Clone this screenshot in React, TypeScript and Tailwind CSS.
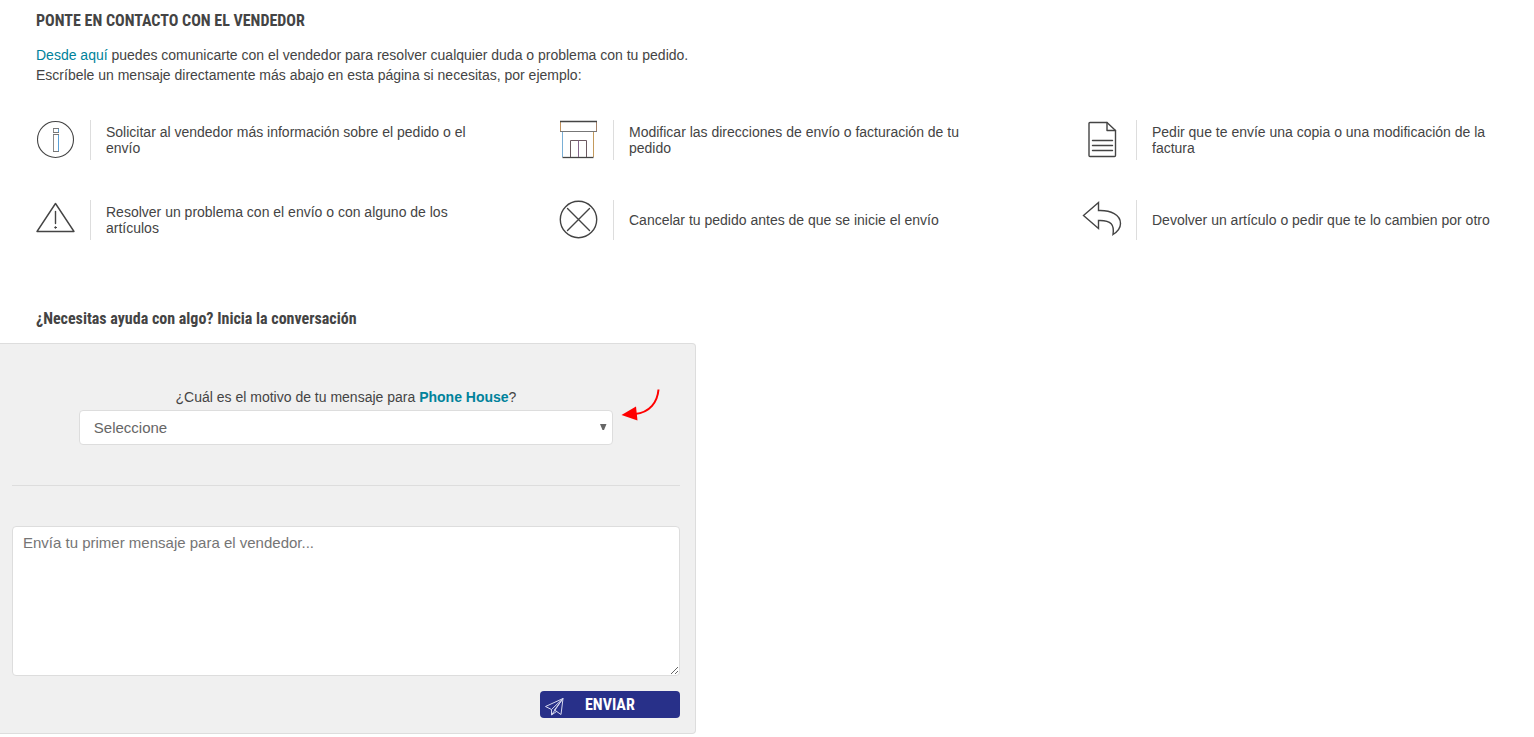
import type { ReactNode } from 'react';

const heading = "font-['Roboto_Condensed','Liberation_Sans',sans-serif] font-bold text-[#444444]";

function Icon({ children }: { children: ReactNode }) {
  return (
    <svg
      width="40"
      height="40"
      viewBox="0 0 40 40"
      fill="none"
      stroke="#444444"
      strokeWidth="1.4"
      strokeLinejoin="round"
      strokeLinecap="round"
      className="shrink-0"
      aria-hidden="true"
    >
      {children}
    </svg>
  );
}

const reasons: { text: string; icon: ReactNode }[] = [
  {
    text: 'Solicitar al vendedor más información sobre el pedido o el envío',
    icon: (
      <>
        <circle cx="19.5" cy="19.5" r="18" strokeWidth="1.1" />
        <g strokeWidth="1" strokeLinejoin="miter" strokeLinecap="butt">
          <path d="M17.5 8v5M17.500 14v18" stroke="#8a8a8a" />
          <path d="M22.5 8v5M22.500 14v18" stroke="#5aa0d6" />
          <path d="M17 8.500h6M17 12.500h6M17 14.500h6M17 31.500h6" stroke="#777777" />
        </g>
      </>
    ),
  },
  {
    text: 'Modificar las direcciones de envío o facturación de tu pedido',
    icon: (
      <g strokeWidth="1" strokeLinecap="butt">
        <path d="M3.500 12v25" stroke="#79afd6" />
        <path d="M34.500 12v25" stroke="#c49a5c" />
        <path d="M3.500 37.500h31" strokeWidth="1.300" />
        <path d="M1.500 1.500v10" stroke="#c0905c" />
        <path d="M37.500 1.500v10" stroke="#a28068" />
        <path d="M1 1.500h37" strokeWidth="1.300" />
        <path d="M1 11.500h37" stroke="#777777" />
        <path d="M11.500 37V20.500h16V37" stroke="#6b5961" />
        <path d="M19.500 20.500V37" stroke="#85658c" />
      </g>
    ),
  },
  {
    text: 'Pedir que te envíe una copia o una modificación de la factura',
    icon: (
      <>
        <path d="M8 2.500h17l8.500 8v25a1 1 0 0 1-1 1H8a1 1 0 0 1-1-1v-32a1 1 0 0 1 1-1z" />
        <path d="M25 2.500v8h8.500M10.500 20.500h20M10.500 25.500h20M10.500 30.500h20" />
      </>
    ),
  },
  {
    text: 'Resolver un problema con el envío o con alguno de los artículos',
    icon: (
      <>
        <path d="M19.500 3.500L38 31.500H1z" />
        <path d="M19.500 11.500v12" />
        <circle cx="19.500" cy="27.500" r="0.800" fill="#444444" strokeWidth="1" />
      </>
    ),
  },
  {
    text: 'Cancelar tu pedido antes de que se inicie el envío',
    icon: (
      <>
        <circle cx="19.500" cy="19.500" r="18.200" />
        <path d="M8.500 8.500l22 22M30.500 8.500l-22 22" />
      </>
    ),
  },
  {
    text: 'Devolver un artículo o pedir que te lo cambien por otro',
    icon: (
      <path
        d="M1.500 15.500L16.500 2.500V10.500C29 10 38.500 15 38.500 23.500C38.500 28.500 35 32 31 34.500C32.500 25 29.500 20 16.500 20.500V28.500Z"
        strokeLinejoin="miter"
      />
    ),
  },
];

export default function App() {
  return (
    <main className="bg-white font-['Liberation_Sans',Arial,sans-serif] text-sm text-[#444444]">
      <section className="pt-[11px] pr-3 pl-9">
        <h1 className={`${heading} text-base leading-5`}>PONTE EN CONTACTO CON EL VENDEDOR</h1>
        <p className="mt-3.5 leading-5">
          <a href="#mensaje" className="text-[#00829b]">Desde aquí</a> puedes comunicarte con el vendedor para
          resolver cualquier duda o problema con tu pedido.
          <br />
          Escríbele un mensaje directamente más abajo en esta página si necesitas, por ejemplo:
        </p>
        <ul className="mt-[35px] grid grid-cols-3 gap-x-[83px] gap-y-10">
          {reasons.map((reason) => (
            <li key={reason.text} className="flex h-10 items-center">
              <Icon>{reason.icon}</Icon>
              <p className="ml-3.5 flex h-10 items-center border-l border-[#dddddd] pl-[15px] leading-4">
                {reason.text}
              </p>
            </li>
          ))}
        </ul>
      </section>

      <section className="mt-[69px]">
        <h2 className={`${heading} pl-9 text-base leading-5`}>¿Necesitas ayuda con algo? Inicia la conversación</h2>
        <form
          id="mensaje"
          onSubmit={(event) => event.preventDefault()}
          className="mt-3.5 w-full max-w-[696px] rounded-r border border-l-0 border-[#dddddd] bg-[#f0f0f0] pt-[43px] pr-[15px] pb-[15px] pl-3"
        >
          <div className="relative mx-auto w-4/5">
            <label htmlFor="motivo" className="block text-center leading-5">
              ¿Cuál es el motivo de tu mensaje para <b className="text-[#00829b]">Phone House</b>?
            </label>
            <div className="relative mt-[3px]">
              <select
                id="motivo"
                className="block h-[35px] w-full appearance-none rounded border border-[#dddddd] bg-white px-3.5 text-[15px] text-[#666666]"
              >
                <option>Seleccione</option>
              </select>
              <svg
                width="8"
                height="7"
                viewBox="0 0 8 7"
                className="pointer-events-none absolute top-3.5 right-1.5"
                aria-hidden="true"
              >
                <path d="M1 0h6.500L5 6H3.500z" fill="#666666" />
              </svg>
            </div>
            <svg
              width="40"
              height="34"
              viewBox="0 0 40 34"
              fill="none"
              className="pointer-events-none absolute top-0 left-full ml-2"
              aria-hidden="true"
            >
              <path d="M37.500 2.500C36.500 15 29 25.500 14 27" stroke="#ff0000" strokeWidth="2" />
              <path d="M0.500 28L15 19.500L16.500 33.500Z" fill="#ff0000" />
            </svg>
          </div>

          <hr className="mt-10 border-[#dddddd]" />

          <textarea
            aria-label="Mensaje para el vendedor"
            placeholder="Envía tu primer mensaje para el vendedor..."
            className="mt-10 block h-[150px] w-full resize rounded border border-[#dddddd] bg-white px-2.5 py-1.5 text-[15px] leading-5 placeholder:text-[#757575]"
          />

          <button
            type="submit"
            className="mt-[15px] ml-auto flex h-[27px] w-[140px] items-center rounded bg-[#283089] pl-1 font-['Roboto_Condensed','Liberation_Sans',sans-serif] text-base font-bold text-white"
          >
            <svg
              width="22"
              height="22"
              viewBox="0 0 22 22"
              fill="none"
              stroke="#d5d7ee"
              strokeWidth="1"
              strokeLinejoin="round"
              className="mt-1"
              aria-hidden="true"
            >
              <path d="M19 2.500L1.500 10.500l6 3zM19 2.500L10.500 14l6.500 4.500zM7.500 13.500v5.500L19 2.500M7.500 19l5-3.500" />
            </svg>
            <span className="ml-[19px]">ENVIAR</span>
          </button>
        </form>
      </section>
    </main>
  );
}
